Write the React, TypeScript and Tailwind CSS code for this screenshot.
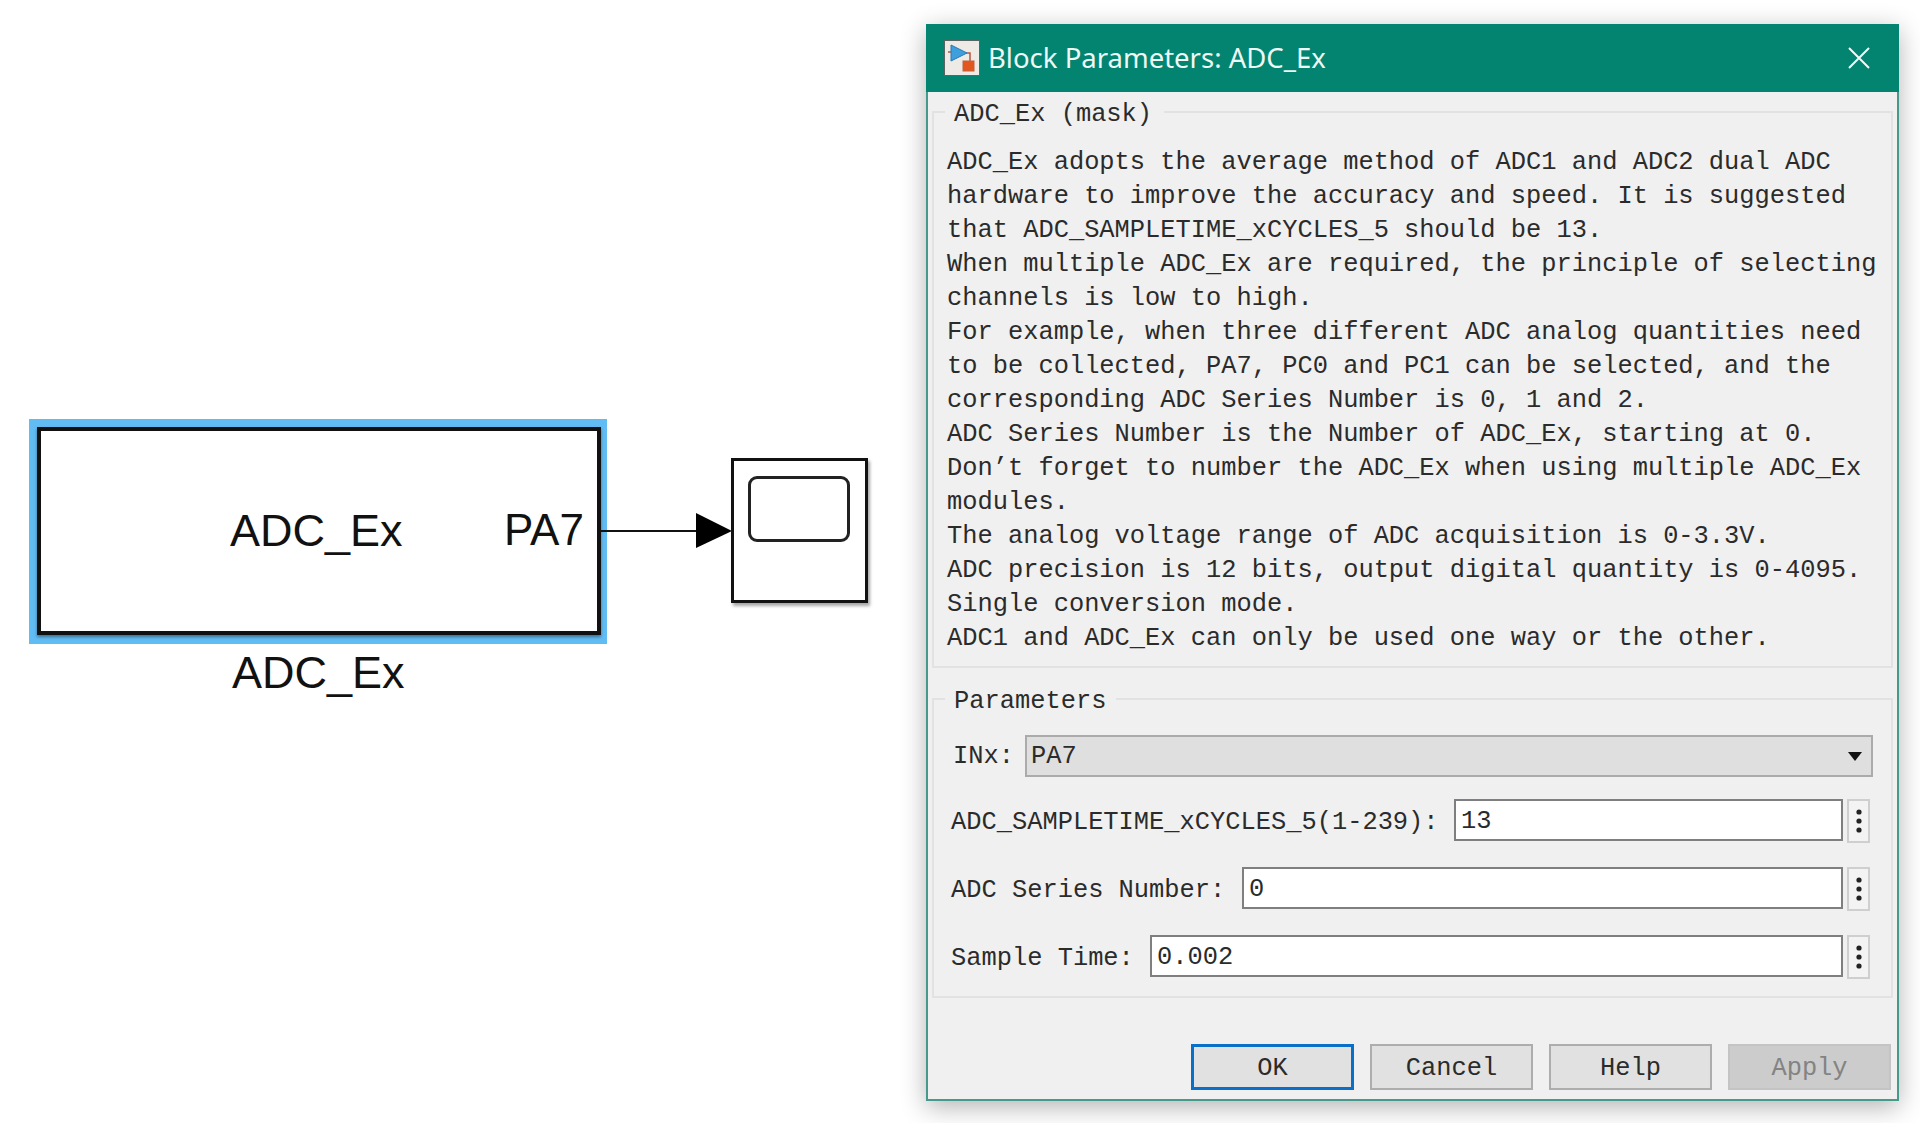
const description = [
  'ADC_Ex adopts the average method of ADC1 and ADC2 dual ADC',
  'hardware to improve the accuracy and speed. It is suggested',
  'that ADC_SAMPLETIME_xCYCLES_5 should be 13.',
  'When multiple ADC_Ex are required, the principle of selecting',
  'channels is low to high.',
  'For example, when three different ADC analog quantities need',
  'to be collected, PA7, PC0 and PC1 can be selected, and the',
  'corresponding ADC Series Number is 0, 1 and 2.',
  'ADC Series Number is the Number of ADC_Ex, starting at 0.',
  'Don\u2019t forget to number the ADC_Ex when using multiple ADC_Ex',
  'modules.',
  'The analog voltage range of ADC acquisition is 0-3.3V.',
  'ADC precision is 12 bits, output digital quantity is 0-4095.',
  'Single conversion mode.',
  'ADC1 and ADC_Ex can only be used one way or the other.',
];

const fields = [
  { label: 'ADC_SAMPLETIME_xCYCLES_5(1-239):', value: '13', width: 'w-[389px]' },
  { label: 'ADC Series Number:', value: '0', width: 'w-[601px]' },
  { label: 'Sample Time:', value: '0.002', width: 'w-[693px]' },
];

function BlockIcon() {
  return (
    <svg width="36" height="36" viewBox="0 0 36 36" className="shrink-0">
      <rect x="0.5" y="0.5" width="35" height="35" fill="#eeebe7" stroke="#5a6462" />
      <path d="M4 12 H9 M22 13 H26 V21" fill="none" stroke="#b5553d" strokeWidth="1.5" />
      <path d="M7 5 L23 13 L7 21 Z" fill="#3f9fdc" stroke="#2a78b0" />
      <rect x="19" y="21" width="11" height="10" fill="#e2571f" stroke="#c0623f" />
    </svg>
  );
}

function Dots() {
  return (
    <svg width="8" height="26" viewBox="0 0 8 26">
      <circle cx="4" cy="4" r="2.6" fill="#222" />
      <circle cx="4" cy="13" r="2.6" fill="#222" />
      <circle cx="4" cy="22" r="2.6" fill="#222" />
    </svg>
  );
}

function Diagram() {
  return (
    <div className="relative w-[926px] shrink-0 font-['Liberation_Sans',Arial,sans-serif] text-[45px] leading-none text-[#111]">
      {/* main block */}
      <div className="absolute left-[29px] top-[419px] h-[225px] w-[578px] bg-[#62bcf4]" />
      <div className="absolute left-[37px] top-[427px] h-[208px] w-[564px] border-[4px] border-[#111] bg-white shadow-[0_2px_3px_rgba(0,0,0,0.4)]" />
      <span className="absolute left-[230px] top-[508px]">ADC_Ex</span>
      <span className="absolute left-[504px] top-[508px] text-[44px]">PA7</span>
      <span className="absolute left-[232px] top-[650px]">ADC_Ex</span>

      {/* signal line */}
      <svg width="136" height="40" viewBox="0 0 136 40" className="absolute left-[600px] top-[511px]">
        <path d="M0 20 H100" stroke="#111" strokeWidth="2" />
        <path d="M96 2 L132 20 L96 37 Z" fill="#000" />
      </svg>

      {/* scope */}
      <div className="absolute left-[731px] top-[458px] h-[145px] w-[137px] border-[3px] border-[#111] bg-white shadow-[2px_3px_3px_rgba(0,0,0,0.35)]" />
      <div className="absolute left-[748px] top-[476px] h-[66px] w-[102px] rounded-[9px] border-[3px] border-[#222] bg-white" />
    </div>
  );
}

export default function App() {
  return (
    <div className="flex h-[1123px] w-[1920px] overflow-hidden bg-white">
      <Diagram />

      <div className="mt-[24px] flex h-[1077px] w-[973px] shrink-0 flex-col border-2 border-t-0 border-[#47998b] bg-[#f0f0f0] font-['Liberation_Mono','Noto_Sans_CJK_SC',monospace] text-[25.4px] leading-[34px] text-[#2b2b2b] shadow-[0_6px_24px_rgba(0,0,0,0.3)]">
        <div className="-mx-[2px] flex h-[68px] shrink-0 items-center bg-[#028471] pl-[18px] pr-[29px] font-['Noto_Sans',sans-serif] text-[27.5px] text-[#eef8f5]">
          <BlockIcon />
          <span className="ml-[8px]">Block Parameters: ADC_Ex</span>
          <svg width="22" height="22" viewBox="0 0 22 22" className="ml-auto">
            <path d="M1 1 L21 21 M21 1 L1 21" stroke="#f2fbf9" strokeWidth="2" />
          </svg>
        </div>

        <fieldset className="mx-[4px] mt-[3px] h-[573px] shrink-0 border-2 border-[#e2e2e2] pl-[13px] pt-[17px]">
          <legend className="-ml-[2px] pl-[9px] pr-[12px]">
            <span className="relative top-[3px]">ADC_Ex (mask)</span>
          </legend>
          {description.map((line) => (
            <div key={line} className="whitespace-pre">{line}</div>
          ))}
        </fieldset>

        <fieldset className="mx-[4px] mt-[14px] h-[316px] shrink-0 border-2 border-[#e2e2e2] pl-[19px] pr-[18px] pt-[19px]">
          <legend className="-ml-[8px] pl-[9px] pr-[10px]">
            <span className="relative top-[3px]">Parameters</span>
          </legend>
          <div className="flex h-[42px] items-center">
            <span className="w-[72px] shrink-0 pt-[2px]">INx:</span>
            <div className="flex h-[42px] flex-1 items-center border-2 border-[#ababab] bg-[#dfdfdf] pl-[4px] pr-[9px]">
              <span className="pt-[2px]">PA7</span>
              <svg width="14" height="9" viewBox="0 0 14 9" className="ml-auto">
                <path d="M0 0 H14 L7 9 Z" fill="#111" />
              </svg>
            </div>
          </div>
          <div className="mt-[22px] flex flex-col gap-[26px]">
            {fields.map((field) => (
              <div key={field.label} className="flex h-[42px] items-start">
                <span className="-ml-[2px] whitespace-pre leading-[48px]">{field.label}</span>
                <div className={`ml-auto flex h-[42px] ${field.width} items-center border-2 border-[#7f7f7f] bg-white pl-[5px] pt-[3px]`}>
                  {field.value}
                </div>
                <div className="ml-[4px] flex h-[44px] w-[23px] shrink-0 items-center justify-center border-2 border-[#cfcfcf] bg-[#f3f3f3]">
                  <Dots />
                </div>
                <div className="w-[3px] shrink-0" />
              </div>
            ))}
          </div>
        </fieldset>

        <div className="mt-[46px] flex justify-end gap-[16px] pr-[6px]">
          <button className="h-[46px] w-[163px] border-[3px] border-[#0a6fc9] bg-[#e1e1e1] pt-[4px]">OK</button>
          <button className="h-[46px] w-[163px] border-2 border-[#adadad] bg-[#e1e1e1] pt-[4px]">Cancel</button>
          <button className="h-[46px] w-[163px] border-2 border-[#adadad] bg-[#e1e1e1] pt-[4px]">Help</button>
          <button className="h-[46px] w-[163px] border-2 border-[#c4c4c4] bg-[#cccccc] pt-[4px] text-[#838383]">Apply</button>
        </div>
      </div>
    </div>
  );
}
